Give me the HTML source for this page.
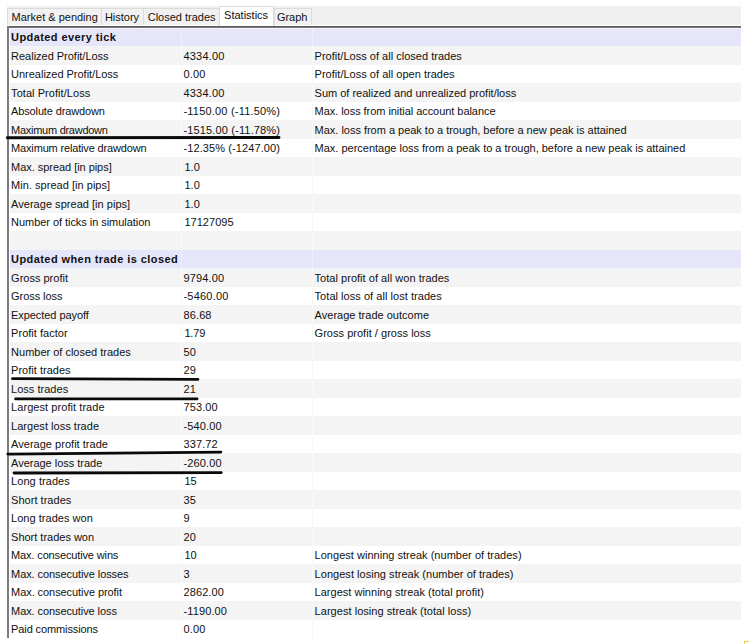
<!DOCTYPE html>
<html><head><meta charset="utf-8"><title>Statistics</title>
<style>
html,body{margin:0;padding:0;background:#fff;}
body{width:749px;height:644px;position:relative;overflow:hidden;font-family:"Liberation Sans",sans-serif;font-size:11px;color:#111;}
.bar{position:absolute;left:6.5px;top:6.3px;width:734.6px;height:18.6px;background:#f0f0f0;}
.tab{position:absolute;top:8.2px;height:16.6px;box-sizing:border-box;border:1px solid #dcdcdc;border-bottom:none;background:#f1f1f1;white-space:nowrap;}
.tab span{position:absolute;top:2.2px;line-height:13px;}
.tab.act{top:6.4px;height:19.6px;background:#fff;border-color:#dadada;}
.tab.act span{top:1.3px;}
.topline{position:absolute;left:7.2px;top:25.7px;width:733.9px;height:2.2px;background:linear-gradient(#565656 0%,#5e5e5e 60%,#a8a8a8 100%);}
.leftline{position:absolute;left:7.2px;top:26px;width:1.45px;height:611.5px;background:#7c7c7c;}
.row{position:absolute;left:10.2px;width:730.9px;height:18.5px;}
.row.g{background:#f4f4f4;}
.row.w{background:#fff;}
.row.h{background:#e6e6fa;font-weight:bold;}
.hl{position:absolute;left:9px;top:27.8px;width:732.1px;height:1.1px;background:#f3f3fc;}
.c{position:absolute;top:0.5px;height:18.5px;line-height:18.5px;white-space:nowrap;}
.c1{left:0.9px;}
.c2{left:173.3px;letter-spacing:0.12px;}
.c3{left:304.4px;letter-spacing:0.02px;}
.sep{position:absolute;top:27.6px;width:1px;height:610.5px;background:rgba(255,255,255,0.42);}
.sepw{position:absolute;width:1px;height:18.5px;background:#f7f7f7;}
svg{position:absolute;left:0;top:0;}
.corner{position:absolute;left:744px;top:641px;width:12px;height:12px;box-sizing:border-box;border:1.3px solid #e9c647;background:#fff;}
</style></head><body>
<div class="bar"></div>
<div class="tab" style="left:6.7px;width:95.2px"><span style="left:3.9px">Market &amp; pending</span></div>
<div class="tab" style="left:100.9px;width:43.5px"><span style="left:3.0px">History</span></div>
<div class="tab" style="left:143.4px;width:76.7px"><span style="left:3.3px">Closed trades</span></div>
<div class="tab act" style="left:219.1px;width:54.5px"><span style="left:4.0px">Statistics</span></div>
<div class="tab" style="left:273.6px;width:38.2px"><span style="left:2.3px">Graph</span></div>
<div class="topline"></div><div class="leftline"></div>
<div class="row h" style="top:27.60px"><div class="c c1" id="t0_0" style="letter-spacing:0.411px">Updated every tick</div></div>
<div class="row g" style="top:46.10px"><div class="c c1" id="t1_0" style="letter-spacing:-0.016px">Realized Profit/Loss</div><div class="c c2" id="t1_1" style="letter-spacing:0.183px">4334.00</div><div class="c c3" id="t1_2" style="letter-spacing:0.016px">Profit/Loss of all closed trades</div></div>
<div class="row w" style="top:64.60px"><div class="c c1" id="t2_0" style="letter-spacing:-0.016px">Unrealized Profit/Loss</div><div class="c c2" id="t2_1">0.00</div><div class="c c3" id="t2_2" style="letter-spacing:0.021px">Profit/Loss of all open trades</div></div>
<div class="row g" style="top:83.10px"><div class="c c1" id="t3_0" style="letter-spacing:0.056px">Total Profit/Loss</div><div class="c c2" id="t3_1" style="letter-spacing:0.183px">4334.00</div><div class="c c3" id="t3_2" style="letter-spacing:-0.003px">Sum of realized and unrealized profit/loss</div></div>
<div class="row w" style="top:101.60px"><div class="c c1" id="t4_0" style="letter-spacing:-0.142px">Absolute drawdown</div><div class="c c2" id="t4_1" style="letter-spacing:0.196px">-1150.00 (-11.50%)</div><div class="c c3" id="t4_2" style="letter-spacing:-0.049px">Max. loss from initial account balance</div></div>
<div class="row g" style="top:120.10px"><div class="c c1" id="t5_0" style="letter-spacing:-0.271px">Maximum drawdown</div><div class="c c2" id="t5_1" style="letter-spacing:0.148px">-1515.00 (-11.78%)</div><div class="c c3" id="t5_2" style="letter-spacing:-0.017px">Max. loss from a peak to a trough, before a new peak is attained</div></div>
<div class="row w" style="top:138.60px"><div class="c c1" id="t6_0" style="letter-spacing:-0.163px">Maximum relative drawdown</div><div class="c c2" id="t6_1" style="letter-spacing:0.099px">-12.35% (-1247.00)</div><div class="c c3" id="t6_2" style="letter-spacing:-0.006px">Max. percentage loss from a peak to a trough, before a new peak is attained</div></div>
<div class="row g" style="top:157.10px"><div class="c c1" id="t7_0" style="letter-spacing:-0.044px">Max. spread [in pips]</div><div class="c c2" id="t7_1" style="margin-left:0.9px">1.0</div></div>
<div class="row w" style="top:175.60px"><div class="c c1" id="t8_0" style="letter-spacing:0.029px">Min. spread [in pips]</div><div class="c c2" id="t8_1" style="margin-left:0.9px">1.0</div></div>
<div class="row g" style="top:194.10px"><div class="c c1" id="t9_0" style="letter-spacing:0.027px">Average spread [in pips]</div><div class="c c2" id="t9_1" style="margin-left:0.9px">1.0</div></div>
<div class="row w" style="top:212.60px"><div class="c c1" id="t10_0" style="letter-spacing:-0.048px">Number of ticks in simulation</div><div class="c c2" id="t10_1" style="margin-left:0.9px;letter-spacing:0.046px">17127095</div></div>
<div class="row g" style="top:231.10px"></div>
<div class="row h" style="top:249.60px"><div class="c c1" id="t12_0" style="letter-spacing:0.420px">Updated when trade is closed</div></div>
<div class="row g" style="top:268.10px"><div class="c c1" id="t13_0" style="letter-spacing:0.005px">Gross profit</div><div class="c c2" id="t13_1" style="letter-spacing:0.143px">9794.00</div><div class="c c3" id="t13_2" style="letter-spacing:0.030px">Total profit of all won trades</div></div>
<div class="row w" style="top:286.60px"><div class="c c1" id="t14_0" style="letter-spacing:-0.067px">Gross loss</div><div class="c c2" id="t14_1" style="letter-spacing:0.214px">-5460.00</div><div class="c c3" id="t14_2" style="letter-spacing:0.042px">Total loss of all lost trades</div></div>
<div class="row g" style="top:305.10px"><div class="c c1" id="t15_0" style="letter-spacing:-0.069px">Expected payoff</div><div class="c c2" id="t15_1">86.68</div><div class="c c3" id="t15_2" style="letter-spacing:0.014px">Average trade outcome</div></div>
<div class="row w" style="top:323.60px"><div class="c c1" id="t16_0" style="letter-spacing:0.030px">Profit factor</div><div class="c c2" id="t16_1" style="margin-left:0.9px;letter-spacing:-0.180px">1.79</div><div class="c c3" id="t16_2" style="letter-spacing:0.028px">Gross profit / gross loss</div></div>
<div class="row g" style="top:342.10px"><div class="c c1" id="t17_0" style="letter-spacing:-0.006px">Number of closed trades</div><div class="c c2" id="t17_1">50</div></div>
<div class="row w" style="top:360.60px"><div class="c c1" id="t18_0" style="letter-spacing:0.018px">Profit trades</div><div class="c c2" id="t18_1">29</div></div>
<div class="row g" style="top:379.10px"><div class="c c1" id="t19_0" style="letter-spacing:0.019px">Loss trades</div><div class="c c2" id="t19_1">21</div></div>
<div class="row w" style="top:397.60px"><div class="c c1" id="t20_0" style="letter-spacing:0.062px">Largest profit trade</div><div class="c c2" id="t20_1">753.00</div></div>
<div class="row g" style="top:416.10px"><div class="c c1" id="t21_0" style="letter-spacing:0.029px">Largest loss trade</div><div class="c c2" id="t21_1">-540.00</div></div>
<div class="row w" style="top:434.60px"><div class="c c1" id="t22_0" style="letter-spacing:0.023px">Average profit trade</div><div class="c c2" id="t22_1">337.72</div></div>
<div class="row g" style="top:453.10px"><div class="c c1" id="t23_0" style="letter-spacing:-0.020px">Average loss trade</div><div class="c c2" id="t23_1">-260.00</div></div>
<div class="row w" style="top:471.60px"><div class="c c1" id="t24_0" style="letter-spacing:0.060px">Long trades</div><div class="c c2" id="t24_1" style="margin-left:0.9px">15</div></div>
<div class="row g" style="top:490.10px"><div class="c c1" id="t25_0" style="letter-spacing:0.025px">Short trades</div><div class="c c2" id="t25_1">35</div></div>
<div class="row w" style="top:508.60px"><div class="c c1" id="t26_0" style="letter-spacing:0.028px">Long trades won</div><div class="c c2" id="t26_1">9</div></div>
<div class="row g" style="top:527.10px"><div class="c c1" id="t27_0" style="letter-spacing:-0.011px">Short trades won</div><div class="c c2" id="t27_1">20</div></div>
<div class="row w" style="top:545.60px"><div class="c c1" id="t28_0" style="letter-spacing:-0.138px">Max. consecutive wins</div><div class="c c2" id="t28_1" style="margin-left:0.9px">10</div><div class="c c3" id="t28_2" style="letter-spacing:0.023px">Longest winning streak (number of trades)</div></div>
<div class="row g" style="top:564.10px"><div class="c c1" id="t29_0" style="letter-spacing:-0.078px">Max. consecutive losses</div><div class="c c2" id="t29_1">3</div><div class="c c3" id="t29_2" style="letter-spacing:0.035px">Longest losing streak (number of trades)</div></div>
<div class="row w" style="top:582.60px"><div class="c c1" id="t30_0" style="letter-spacing:-0.071px">Max. consecutive profit</div><div class="c c2" id="t30_1">2862.00</div><div class="c c3" id="t30_2" style="letter-spacing:0.016px">Largest winning streak (total profit)</div></div>
<div class="row g" style="top:601.10px"><div class="c c1" id="t31_0" style="letter-spacing:-0.089px">Max. consecutive loss</div><div class="c c2" id="t31_1">-1190.00</div><div class="c c3" id="t31_2" style="letter-spacing:0.042px">Largest losing streak (total loss)</div></div>
<div class="row w" style="top:619.60px"><div class="c c1" id="t32_0" style="letter-spacing:-0.116px">Paid commissions</div><div class="c c2" id="t32_1">0.00</div></div>
<div class="hl"></div>
<div class="sep" style="left:181.2px"></div>
<div class="sepw" style="left:181.2px;top:64.60px"></div><div class="sepw" style="left:181.2px;top:101.60px"></div><div class="sepw" style="left:181.2px;top:138.60px"></div><div class="sepw" style="left:181.2px;top:175.60px"></div><div class="sepw" style="left:181.2px;top:212.60px"></div><div class="sepw" style="left:181.2px;top:286.60px"></div><div class="sepw" style="left:181.2px;top:323.60px"></div><div class="sepw" style="left:181.2px;top:360.60px"></div><div class="sepw" style="left:181.2px;top:397.60px"></div><div class="sepw" style="left:181.2px;top:434.60px"></div><div class="sepw" style="left:181.2px;top:471.60px"></div><div class="sepw" style="left:181.2px;top:508.60px"></div><div class="sepw" style="left:181.2px;top:545.60px"></div><div class="sepw" style="left:181.2px;top:582.60px"></div><div class="sepw" style="left:181.2px;top:619.60px"></div>
<div class="sep" style="left:312.0px"></div>
<div class="sepw" style="left:312.0px;top:64.60px"></div><div class="sepw" style="left:312.0px;top:101.60px"></div><div class="sepw" style="left:312.0px;top:138.60px"></div><div class="sepw" style="left:312.0px;top:175.60px"></div><div class="sepw" style="left:312.0px;top:212.60px"></div><div class="sepw" style="left:312.0px;top:286.60px"></div><div class="sepw" style="left:312.0px;top:323.60px"></div><div class="sepw" style="left:312.0px;top:360.60px"></div><div class="sepw" style="left:312.0px;top:397.60px"></div><div class="sepw" style="left:312.0px;top:434.60px"></div><div class="sepw" style="left:312.0px;top:471.60px"></div><div class="sepw" style="left:312.0px;top:508.60px"></div><div class="sepw" style="left:312.0px;top:545.60px"></div><div class="sepw" style="left:312.0px;top:582.60px"></div><div class="sepw" style="left:312.0px;top:619.60px"></div>
<div class="corner"></div>
<svg width="749" height="644" viewBox="0 0 749 644"><line x1="7.3" y1="137.7" x2="279.0" y2="137.5" stroke="#0a0a0a" stroke-width="2.9" stroke-linecap="round"/><line x1="12.5" y1="378.7" x2="197.9" y2="379.4" stroke="#0a0a0a" stroke-width="2.8" stroke-linecap="round"/><line x1="15.6" y1="398.9" x2="197.1" y2="398.8" stroke="#0a0a0a" stroke-width="2.8" stroke-linecap="round"/><line x1="7.8" y1="454.1" x2="220.9" y2="452.1" stroke="#0a0a0a" stroke-width="2.8" stroke-linecap="round"/><line x1="14.0" y1="473.0" x2="221.3" y2="472.6" stroke="#0a0a0a" stroke-width="2.8" stroke-linecap="round"/></svg>
</body></html>
